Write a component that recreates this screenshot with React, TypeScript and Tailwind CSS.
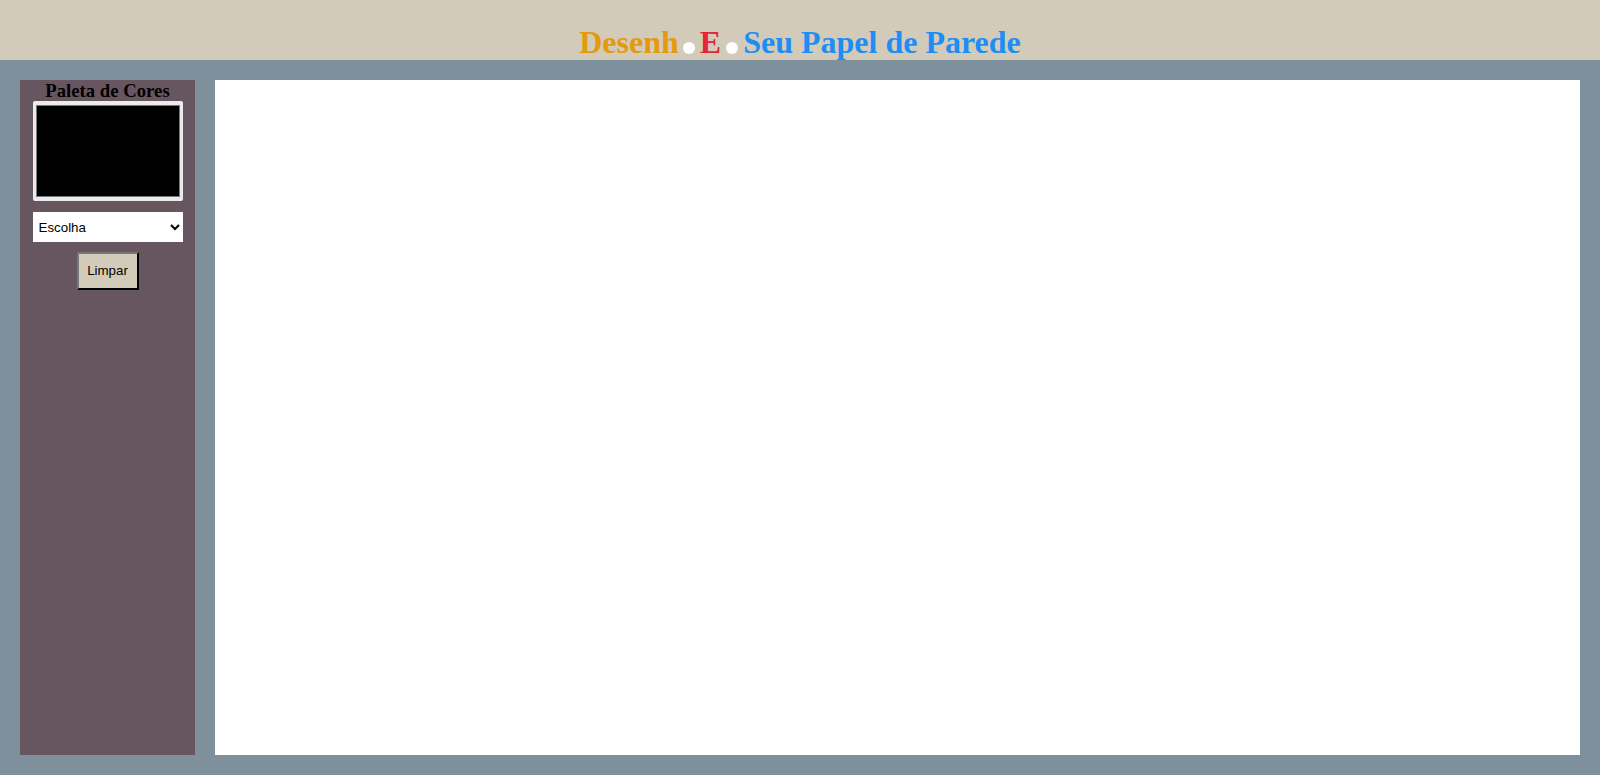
import {useState} from 'react'

export default function App() {
    const [color, setColor] = useState('#000000')

    return (
        <div className="w-[1600px] h-[775px] bg-[#7d909c] flex flex-col overflow-hidden">
            {/* Header */}
            <header className="h-[60px] bg-[#d3cbba] flex items-end justify-center">
                <h1 className="font-['Liberation_Serif',serif] font-bold text-[32px] leading-[37px] mb-[-1px] flex items-baseline">
                    <span className="text-[#e49a0e]">Desenh</span>
                    <span className="inline-block w-[12px] h-[12px] rounded-full bg-white ml-[4px] mr-[5px] self-end mb-[7px]"/>
                    <span className="text-[#e3263c]">E</span>
                    <span className="inline-block w-[12px] h-[12px] rounded-full bg-white ml-[5px] mr-[5px] self-end mb-[7px]"/>
                    <span className="text-[#1e8ef5]">Seu Papel de Parede</span>
                </h1>
            </header>

            {/* Body */}
            <main className="flex-1 flex gap-[20px] p-[20px]">
                <aside className="w-[175px] bg-[#675660] flex flex-col items-center">
                    <h2 className="font-['Liberation_Serif',serif] font-bold text-[18.72px] leading-[21px] text-black">
                        Paleta de Cores
                    </h2>
                    <div className="w-[150px] h-[100px] bg-[#ececec] rounded-[2px] p-[4px_3px]">
                        <div
                            className="w-full h-full border border-[#767676]"
                            style={{backgroundColor: color}}
                        />
                    </div>
                    <select
                        className="mt-[11px] w-[150px] h-[30px] bg-white text-black text-[13.33px] font-['Liberation_Sans',Arial,sans-serif] px-[2px]"
                        defaultValue="escolha"
                        onChange={(e) => setColor(e.target.value === 'escolha' ? '#000000' : e.target.value)}
                    >
                        <option value="escolha">Escolha</option>
                        <option value="#ff0000">Vermelho</option>
                        <option value="#00ff00">Verde</option>
                        <option value="#0000ff">Azul</option>
                    </select>
                    <button
                        className="mt-[10px] w-[62px] h-[38px] bg-[#d3cbba] text-black text-[13.33px] font-['Liberation_Sans',Arial,sans-serif] border-2 border-t-[#767676] border-l-[#767676] border-r-black border-b-black"
                        onClick={() => setColor('#000000')}
                    >
                        Limpar
                    </button>
                </aside>

                {/* Drawing canvas */}
                <section className="flex-1 bg-white"/>
            </main>
        </div>
    )
}
